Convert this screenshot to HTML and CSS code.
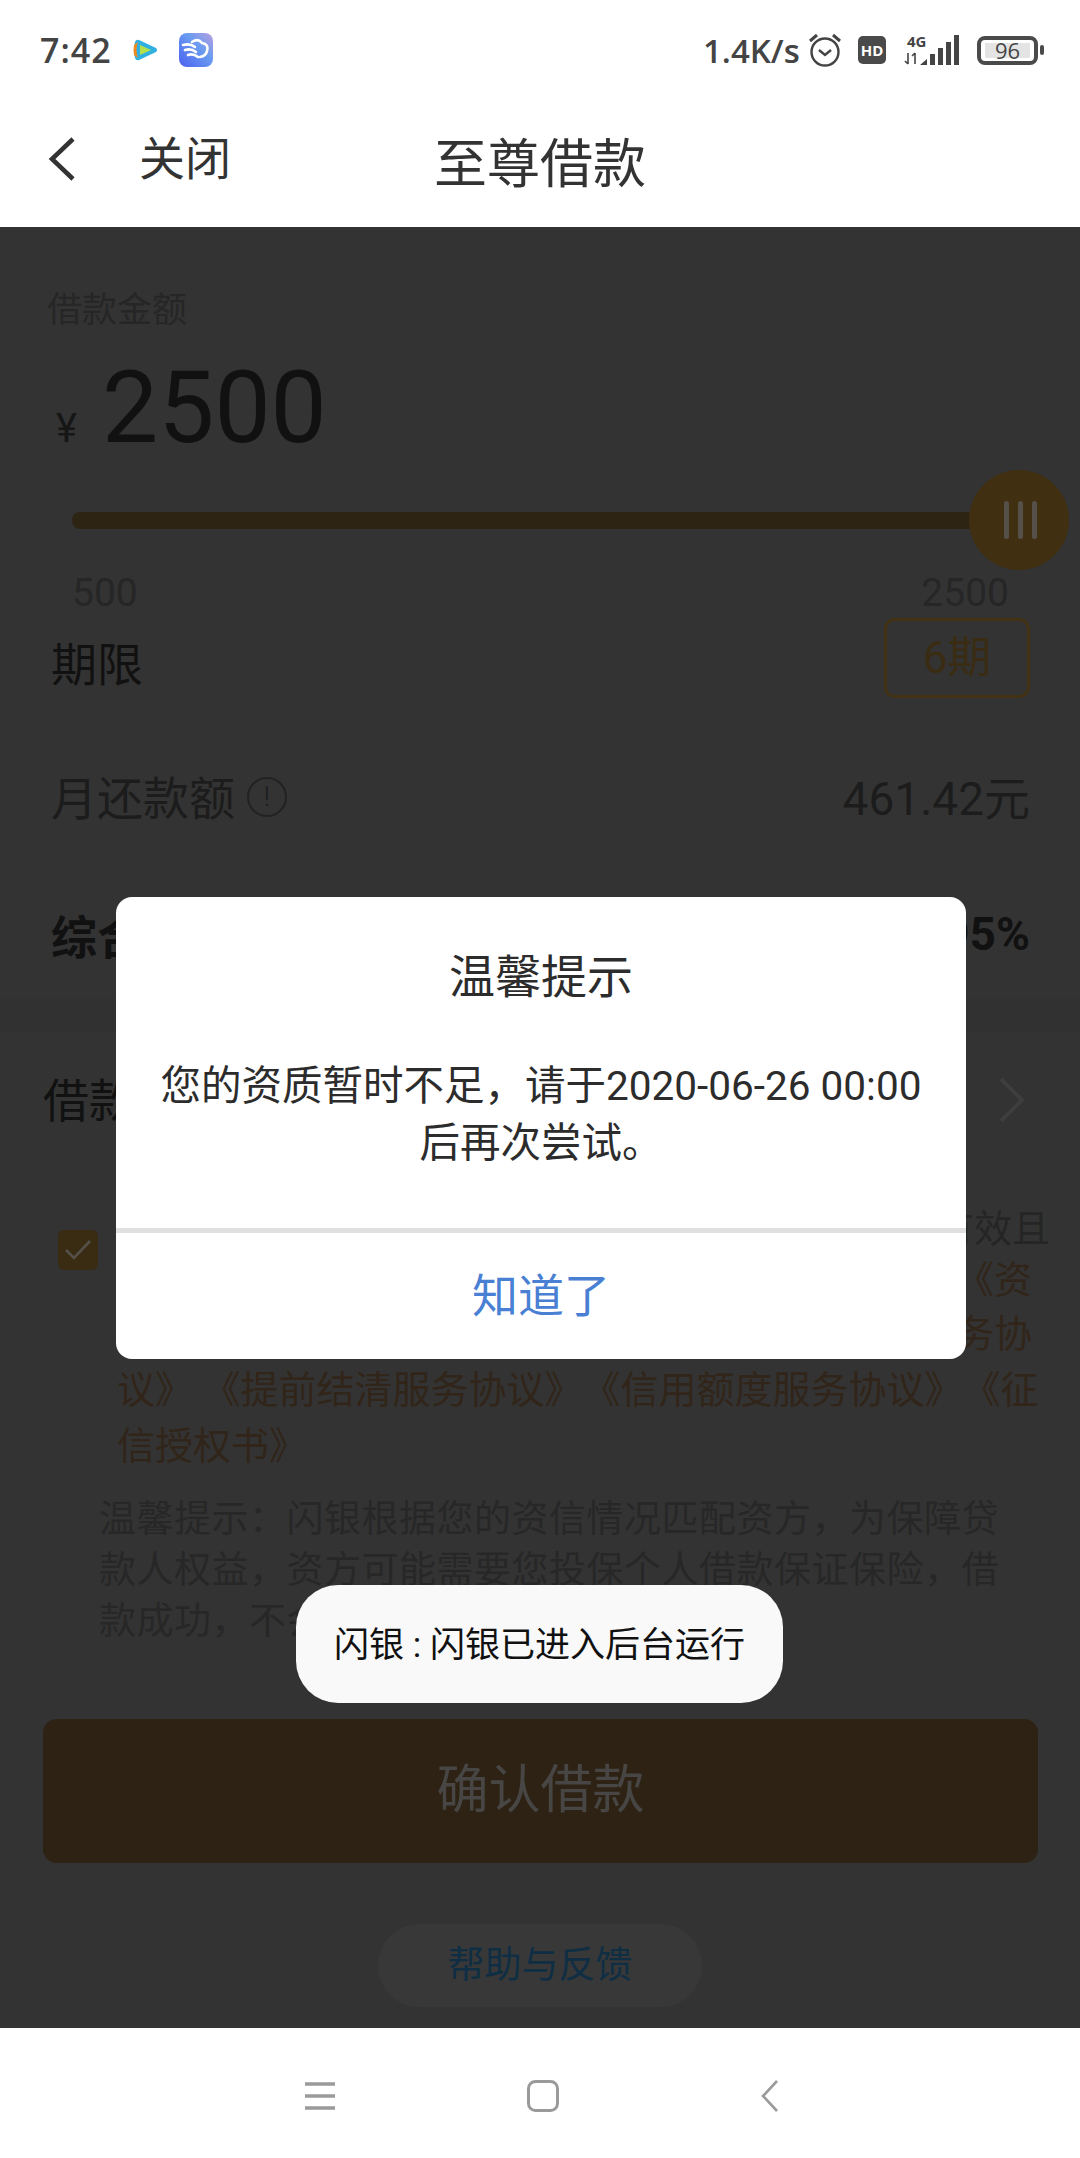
FILE: index.html
```html
<!DOCTYPE html>
<html lang="zh-CN">
<head>
  <meta charset="UTF-8">
  <title>至尊借款</title>
  <link rel="stylesheet" href="styles.css">
</head>
<body>
<div class="statusbar">
  <span class="time">7:42</span>
  <svg class="ic-video" width="25" height="22" viewBox="0 0 25 22">
    <path d="M6 1 L23 9 Q25 11 23 13 L6 21 Q3 22 2 19 Q0 11 2 3 Q3 0 6 1Z" fill="#2fb0e0"/>
    <path d="M5 3 Q2 11 5 19 L1 16 Q0 11 1 6Z" fill="#f08a1d"/>
    <path d="M7 6 L18 11 L7 16Z" fill="#b6e04a"/>
  </svg>
  <svg class="ic-app" width="34" height="34" viewBox="0 0 34 34">
    <defs>
      <linearGradient id="appbg" x1="0" y1="1" x2="1" y2="0">
        <stop offset="0" stop-color="#4a5ff0"/>
        <stop offset="0.6" stop-color="#6a9cf0"/>
        <stop offset="1" stop-color="#b9a0e0"/>
      </linearGradient>
    </defs>
    <rect width="34" height="34" rx="8" fill="url(#appbg)"/>
    <path d="M4 12 Q11 10 16 14 M6 17 Q12 15 17 19 M9 22 Q14 20 19 24 M13 9 Q19 5 23 10 Q30 11 28 18 Q27 23 21 24" fill="none" stroke="#fff" stroke-width="2.6" stroke-linecap="round"/>
  </svg>
  <span class="speed">1.4K/s</span>
  <svg class="ic-alarm" width="34" height="34" viewBox="0 0 34 34">
    <circle cx="17" cy="19" r="13.5" fill="none" stroke="#444" stroke-width="2.4"/>
    <path d="M11 17 L17 22 L23 17" fill="none" stroke="#444" stroke-width="2.4"/>
    <path d="M2 8 L9 2 M32 8 L25 2" stroke="#444" stroke-width="3"/>
  </svg>
  <span class="hd">HD</span>
  <svg class="ic-signal" width="56" height="30" viewBox="0 0 56 30">
    <text class="net" x="3" y="12">4G</text>
    <path d="M4 18 V29 M1 26 L4 29 M11 29 V18 M8 21 L11 18" fill="none" stroke="#444" stroke-width="1.6"/>
    <path d="M16 30 L23 24 V30Z" fill="#444"/>
    <rect x="26" y="19" width="5" height="11" fill="#444"/>
    <rect x="34" y="13" width="5" height="17" fill="#444"/>
    <rect x="42" y="7" width="5" height="23" fill="#444"/>
    <rect x="50" y="0" width="5" height="30" fill="#444"/>
  </svg>
  <div class="battery"><span class="battery-fill">96</span></div>
  <span class="battery-nub"></span>
</div>

<div class="navbar">
  <div class="nav-left">
    <svg width="27" height="44" viewBox="0 0 27 44"><path d="M25 2 L4 22 L25 42" fill="none" stroke="#333" stroke-width="4.5"/></svg>
    <span class="nav-close">关闭</span>
  </div>
  <div class="nav-title">至尊借款</div>
</div>

<div class="content">
  <div class="amount-label">借款金额</div>
  <div class="amount"><span class="yen">¥</span><span class="amount-num">2500</span></div>

  <div class="slider">
    <div class="track"></div>
    <div class="thumb"><i></i><i></i><i></i></div>
  </div>
  <div class="scale"><span>500</span><span>2500</span></div>

  <div class="row term-row">
    <span class="term-label">期限</span>
    <span class="term-btn">6期</span>
  </div>

  <div class="row repay-row">
    <span class="row-label">月还款额<span class="info">!</span></span>
    <span class="row-value">461.42元</span>
  </div>

  <div class="row rate-row">
    <span>综合年化利率</span>
    <span>35.95%</span>
  </div>

  <div class="band"></div>

  <div class="row loan-row">
    <span>借款用途</span>
    <svg class="ic-more" width="26" height="46" viewBox="0 0 26 46"><path d="M2 2 L23 23 L2 44" fill="none" stroke="#3e3e3e" stroke-width="4"/></svg>
  </div>

  <div class="agreement">
    <div class="check">
      <svg width="28" height="22" viewBox="0 0 28 22"><path d="M2 11 L10 19 L26 2" fill="none" stroke="#55504a" stroke-width="2.6"/></svg>
    </div>
    <div class="agree-text">
      <div class="line first">本人已阅读并同意以下协议，确认所填信息真实有效且</div>
      <div class="line second link">《借款协议》《委托担保协议》《个人协议》《资</div>
      <div class="line third link">质审核服务协议》《咨询服务协议》《贷后管理服务协</div>
      <div class="line link">议》 《提前结清服务协议》《信用额度服务协议》《征</div>
      <div class="line link">信授权书》</div>
    </div>
  </div>

  <div class="notice">
    温馨提示：闪银根据您的资信情况匹配资方，为保障贷<br>
    款人权益，资方可能需要您投保个人借款保证保险，借<br>
    款成功，不会收取额外费用。
  </div>

  <div class="confirm">确认借款</div>
  <div class="help">帮助与反馈</div>
</div>

<div class="bottombar">
  <svg class="ic-menu" width="30" height="28" viewBox="0 0 30 28"><path d="M0 2 H30 M0 14 H30 M0 26 H30" stroke="#9a9a9a" stroke-width="3.4"/></svg>
  <svg class="ic-home" width="32" height="32" viewBox="0 0 32 32"><rect x="1.5" y="1.5" width="29" height="29" rx="7" fill="none" stroke="#9a9a9a" stroke-width="3"/></svg>
  <svg class="ic-back" width="17" height="32" viewBox="0 0 17 32"><path d="M16 1 L2 16 L16 31" fill="none" stroke="#9a9a9a" stroke-width="2.6"/></svg>
</div>

<!--弹窗-->
<div class="dialog">
  <div class="dialog-title">温馨提示</div>
  <div class="dialog-body">您的资质暂时不足，请于2020-06-26 00:00<br>后再次尝试。</div>
  <div class="dialog-line"></div>
  <div class="dialog-btn">知道了</div>
</div>

<div class="toast">闪银 : 闪银已进入后台运行</div>
</body>
</html>
```

FILE: styles.css
```css
* {
  margin: 0;
  padding: 0;
  box-sizing: border-box;
}

body {
  position: relative;
  width: 1080px;
  height: 2158px;
  overflow: hidden;
  display: flex;
  flex-direction: column;
  background-color: #fff;
  color: #333;
  font-family: Roboto, "Noto Sans CJK SC", sans-serif;
  text-spacing-trim: space-all;
}

/* status bar */
.statusbar {
  height: 92px;
  display: flex;
  align-items: center;
  padding: 8px 0 0 40px;
  flex-shrink: 0;
  color: #444;
  font-family: "Open Sans", sans-serif;
  font-weight: 600;
}

.time {
  width: 72px;
  font-size: 34px;
  letter-spacing: 1px;
  white-space: nowrap;
}

.ic-video {
  margin-left: 21px;
}

.ic-app {
  margin-left: 21px;
}

.speed {
  margin-left: 490px;
  width: 105px;
  font-size: 33px;
  white-space: nowrap;
}

.ic-alarm {
  flex-shrink: 0;
}

.hd {
  margin-left: 16px;
  width: 28px;
  height: 28px;
  border-radius: 5px;
  background-color: #4a4a4a;
  color: #fff;
  font-size: 15px;
  font-weight: 700;
  line-height: 28px;
  text-align: center;
}

.ic-signal {
  margin-left: 18px;
  overflow: visible;
}

.net {
  font-size: 15px;
  font-weight: 700;
  fill: #444;
}

.battery {
  margin-left: 17px;
  width: 61px;
  height: 29px;
  border: 4px solid #4a4a4a;
  border-radius: 8px;
  padding: 3px 4px;
}

.battery-fill {
  display: block;
  height: 15px;
  width: 45px;
  background-color: #e4e4e4;
  font-size: 22px;
  font-weight: 400;
  line-height: 15px;
  text-align: center;
}

.battery-nub {
  margin-left: 2px;
  width: 4px;
  height: 10px;
  border-radius: 2px;
  background-color: #4a4a4a;
}

/* title bar */
.navbar {
  position: relative;
  height: 135px;
  display: flex;
  align-items: center;
  justify-content: center;
  flex-shrink: 0;
}

.nav-left {
  position: absolute;
  left: 48px;
  top: 45px;
  display: flex;
  align-items: center;
  gap: 64px;
}

.nav-close {
  font-size: 46px;
  line-height: 44px;
}

.nav-title {
  font-size: 53px;
}

/* page under the dialog */
.content {
  flex: 1;
  background-color: #333;
  color: #111;
}

.amount-label {
  margin: 64px 0 0 47px;
  height: 40px;
  color: #262626;
  font-size: 35px;
  line-height: 40px;
}

.amount {
  margin: 23px 0 0 56px;
  height: 107px;
  display: flex;
  align-items: baseline;
  gap: 25px;
  line-height: 107px;
}

.yen {
  font-size: 40px;
  color: #161616;
}

.amount-num {
  font-size: 100px;
  color: #111;
}

.slider {
  margin-top: 9px;
  height: 100px;
  display: flex;
  align-items: center;
  padding-left: 72px;
}

.track {
  width: 903px;
  height: 17px;
  border-radius: 8px 0 0 8px;
  background-color: #2e2413;
}

.thumb {
  margin-left: -6px;
  width: 100px;
  height: 100px;
  border-radius: 50%;
  background-color: #412f12;
  display: flex;
  align-items: center;
  justify-content: center;
  gap: 9px;
  padding-left: 2px;
}

.thumb i {
  width: 5px;
  height: 38px;
  border-radius: 3px;
  background-color: #55504a;
}

.scale {
  margin-top: 3px;
  height: 40px;
  display: flex;
  justify-content: space-between;
  padding: 0 71px 0 72px;
  color: #262626;
  font-size: 39px;
  line-height: 40px;
}

.row {
  display: flex;
  align-items: center;
  justify-content: space-between;
  padding: 0 50px 0 51px;
  font-size: 46px;
}

.term-row {
  margin-top: 5px;
  height: 80px;
}

.term-label {
  padding-top: 6px;
}

.term-btn {
  width: 146px;
  height: 80px;
  border: 3px solid #433214;
  border-radius: 11px;
  color: #3a2c12;
  font-size: 44px;
  line-height: 74px;
  text-align: center;
}

.repay-row {
  margin-top: 47px;
  height: 100px;
  color: #1c1c1c;
}

.row-label {
  display: flex;
  align-items: center;
}

.info {
  margin: 4px 0 0 12px;
  width: 40px;
  height: 40px;
  border: 2px solid #222;
  border-radius: 50%;
  font-size: 28px;
  font-weight: 300;
  line-height: 36px;
  text-align: center;
}

.rate-row {
  margin-top: 39px;
  height: 100px;
  font-weight: 700;
}

.band {
  margin-top: 15px;
  height: 33px;
  background-color: #313131;
}

.loan-row {
  margin-top: 15px;
  height: 100px;
  padding-left: 43px;
  padding-right: 55px;
}

.ic-more {
  margin-top: 6px;
}

.agreement {
  margin: 57px 0 0 58px;
  display: flex;
  gap: 19px;
}

.check {
  margin-top: 26px;
  width: 40px;
  height: 40px;
  border-radius: 6px;
  background-color: #3a2b13;
  display: flex;
  align-items: center;
  justify-content: center;
}

.agree-text {
  width: 933px;
  color: #252525;
  font-size: 38px;
  white-space: nowrap;
}

.line {
  height: 56px;
  line-height: 56px;
}

.first {
  height: 50px;
  line-height: 50px;
  text-align: right;
}

.second {
  height: 52px;
  line-height: 52px;
}

.second,
.third {
  text-align: right;
  padding-right: 18px;
}

.link {
  color: #31251a;
}

.notice {
  margin: 20px 0 0 99px;
  color: #272727;
  font-size: 37px;
  letter-spacing: 0.5px;
  line-height: 51px;
  white-space: nowrap;
}

.confirm {
  margin: 72px 42px 0 43px;
  height: 144px;
  border-radius: 14px;
  background-color: #2d2213;
  color: #474644;
  font-size: 52px;
  line-height: 144px;
  text-align: center;
}

.help {
  margin: 61px auto 0;
  width: 324px;
  height: 83px;
  border-radius: 41px;
  background-color: #383838;
  color: #0f2e44;
  font-size: 37px;
  line-height: 83px;
  text-align: center;
}

/* bottom navigation */
.bottombar {
  height: 130px;
  flex-shrink: 0;
  display: flex;
  align-items: center;
  padding: 6px 0 0 305px;
}

.ic-home {
  margin-left: 192px;
}

.ic-back {
  margin-left: 202px;
}

/* dialog */
.dialog {
  position: absolute;
  left: 116px;
  top: 897px;
  width: 850px;
  height: 462px;
  border-radius: 16px;
  background-color: #fff;
  color: #2c2c2c;
  text-align: center;
  display: flex;
  flex-direction: column;
}

.dialog-title {
  margin-top: 50px;
  font-size: 46px;
  line-height: 60px;
}

.dialog-body {
  margin-top: 51px;
  font-size: 40.5px;
  line-height: 57px;
}

.dialog-line {
  margin-top: 56px;
  height: 5px;
  background-color: #e0e0e0;
}

.dialog-btn {
  flex: 1;
  color: #4a80d4;
  font-size: 46px;
  line-height: 126px;
}

.toast {
  position: absolute;
  left: 296px;
  top: 1585px;
  width: 487px;
  height: 118px;
  border-radius: 42px;
  background-color: #f9f9f9;
  color: #111;
  font-size: 35px;
  line-height: 122px;
  text-align: center;
  white-space: nowrap;
}
```
